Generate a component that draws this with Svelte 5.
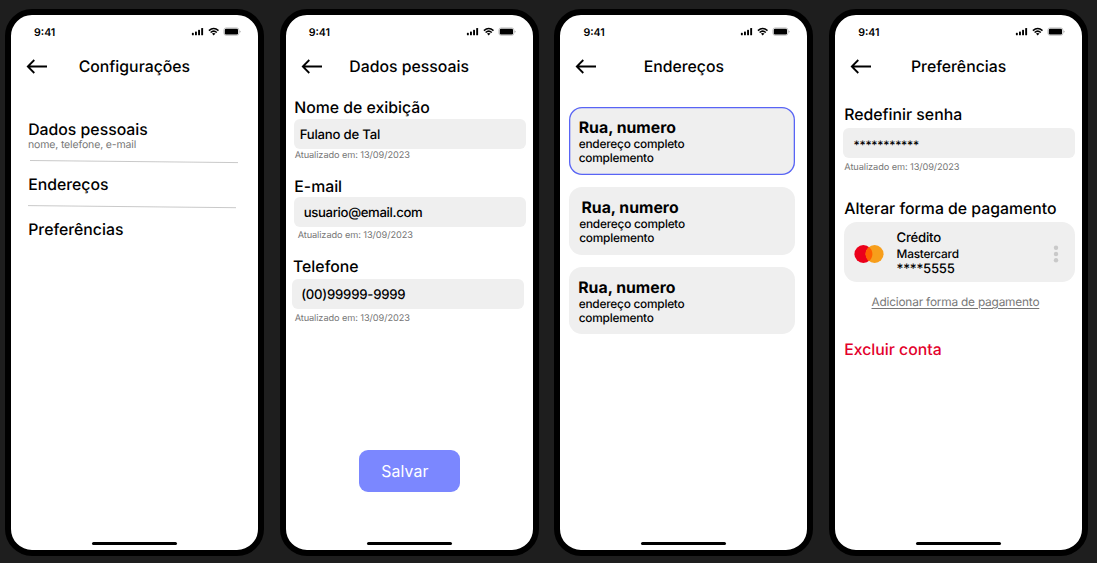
<script>
  const fields = [
    { key: 'name', label: 'Nome de exibição', value: 'Fulano de Tal' },
    { key: 'email', label: 'E-mail', value: 'usuario@email.com' },
    { key: 'tel', label: 'Telefone', value: '(00)99999-9999' }
  ];
  const addresses = [{ key: 'first' }, { key: 'second' }, { key: 'third' }];
  const updated = 'Atualizado em: 13/09/2023';
</script>

{#snippet top(title)}
  <div class="status">
    <span class="time">9:41</span>
    <svg width="50" height="10" viewBox="0 0 50 10">
      <rect x="0.9" y="5.8" width="1.9" height="2.5" rx=".6" />
      <rect x="4" y="4.5" width="1.9" height="3.8" rx=".6" />
      <rect x="7.1" y="2.8" width="1.9" height="5.5" rx=".6" />
      <rect x="10.2" y="1" width="1.9" height="7.3" rx=".6" />
      <g fill="none" stroke="#000" stroke-width="1.5">
        <path d="M17.9 3.6Q22.7-.6 27.5 3.6" />
        <path d="M19.6 5.5Q22.7 2.8 25.8 5.5" />
      </g>
      <path d="M20.9 6.6Q22.7 5.3 24.5 6.6L22.7 8.5Z" />
      <rect x="32.9" y=".9" width="15" height="7.4" rx="2.2" fill="#fff" stroke="#aaa" stroke-width=".7" />
      <rect x="33.8" y="1.7" width="13.2" height="5.8" rx="1.3" />
      <path d="M48.6 3.4q1 .5 1 1.2t-1 1.2z" fill="#999" />
    </svg>
  </div>
  <header>
    <svg width="22" height="16" viewBox="0 0 22 16">
      <path d="M21 7.5H2M8.3 1L1.8 7.5L8.3 14" fill="none" stroke="#000" stroke-width="1.8" />
    </svg>
    <h1>{title}</h1>
    <span></span>
  </header>
{/snippet}

<main>
  <section class="phone settings">
    {@render top('Configurações')}
    <div class="body">
      <h2>Dados pessoais</h2>
      <p class="hint">nome, telefone, e-mail</p>
      <svg class="rule one" width="208" height="4" viewBox="0 0 208 4"><path d="M0 .5L208 2.6" stroke="#bbb" stroke-width=".8" /></svg>
      <h2 class="addresses">Endereços</h2>
      <svg class="rule two" width="208" height="4" viewBox="0 0 208 4"><path d="M0 .6L208 2.7" stroke="#bbb" stroke-width=".8" /></svg>
      <h2 class="prefs">Preferências</h2>
    </div>
    <div class="home"></div>
  </section>

  <section class="phone personal">
    {@render top('Dados pessoais')}
    <div class="body">
      {#each fields as f}
        <div class="field {f.key}">
          <h2>{f.label}</h2>
          <div class="input">{f.value}</div>
          <p class="note">{updated}</p>
        </div>
      {/each}
      <button>Salvar</button>
    </div>
    <div class="home"></div>
  </section>

  <section class="phone places">
    {@render top('Endereços')}
    <div class="body">
      {#each addresses as a}
        <article class={a.key}>
          <h3>Rua, numero</h3>
          <p>endereço completo<br />complemento</p>
        </article>
      {/each}
    </div>
    <div class="home"></div>
  </section>

  <section class="phone preferences">
    {@render top('Preferências')}
    <div class="body">
      <h2>Redefinir senha</h2>
      <div class="input password">***********</div>
      <p class="note">{updated}</p>
      <h2 class="change">Alterar forma de pagamento</h2>
      <div class="card">
        <svg class="brand" width="30" height="20" viewBox="0 0 30 20">
          <circle cx="9.4" cy="10" r="9" fill="#eb001b" />
          <circle cx="20.6" cy="10" r="9" fill="#f79e1b" />
          <path d="M15 2.95a9 9 0 0 1 0 14.1a9 9 0 0 1 0-14.1z" fill="#ff5f00" />
        </svg>
        <div class="info">
          <span class="type">Crédito</span>
          <span class="issuer">Mastercard</span>
          <span class="digits">****5555</span>
        </div>
        <svg class="dots" width="6" height="18" viewBox="0 0 6 18" fill="#c9c9c9">
          <circle cx="3" cy="2.7" r="2.2" /><circle cx="3" cy="9" r="2.2" /><circle cx="3" cy="15.2" r="2.2" />
        </svg>
      </div>
      <a href="#add">Adicionar forma de pagamento</a>
      <h2 class="delete">Excluir conta</h2>
    </div>
    <div class="home"></div>
  </section>
</main>

<style>
  :global(body) { margin: 0; background: #1e1e1e; }
  main {
    display: flex; gap: 15.55px; box-sizing: border-box;
    width: 1097px; height: 563px; padding: 9px 0 0 4.8px; overflow: hidden;
    background: #1e1e1e; color: #000; font-family: Inter, sans-serif;
    text-rendering: geometricPrecision;
  }
  h1, h2, h3, p { margin: 0; font-weight: 400; white-space: nowrap; }
  svg { display: block; flex: none; }
  .phone {
    flex: none; display: flex; flex-direction: column; box-sizing: border-box;
    width: 259.2px; height: 547px; border: 6px solid #000; border-radius: 27px; background: #fff;
  }
  .status { display: flex; justify-content: space-between; height: 14px; padding: 10px 17px 0 23.2px; }
  .status svg { margin-top: 2px; }
  .time { font-size: 10.6px; line-height: 15.2px; font-weight: 600; }
  header { display: grid; grid-template-columns: 22px 1fr 22px; align-items: center; height: 20px; margin-top: 17.6px; padding: 0 15.2px; }
  h1, h2 { font-size: 15.8px; line-height: 21.4px; font-weight: 500; }
  h1 { line-height: 20px; text-align: center; }
  h2 { margin-bottom: -1.4px; padding-left: .6px; }
  .body { flex: 1; display: flex; flex-direction: column; align-items: flex-start; }
  .home { align-self: center; width: 85px; height: 3.5px; margin-bottom: 5px; border-radius: 2px; background: #000; }

  .settings .body { padding: 42.4px 0 0 16.8px; }
  .hint { margin: -1px 0 -1.4px .3px; color: #777; font-size: 10.54px; line-height: 13.4px; letter-spacing: -.15px; }
  .rule.one { margin: 9.8px 0 0 2.6px; }
  .addresses { margin-top: 10.4px; }
  .rule.two { margin: 10.4px 0 0 .5px; }
  .prefs { margin-top: 10.4px; }

  .input {
    box-sizing: border-box; width: 232px; height: 30px; border-radius: 6px;
    background: #efefef; font-size: 13.17px; line-height: 32px; font-weight: 500; letter-spacing: -.22px;
  }
  .note { color: #777; font-size: 9.22px; line-height: 15.6px; letter-spacing: -.09px; }
  .personal .body { padding: 20.6px 0 0 6.6px; }
  .field h2 { padding-left: 2.2px; }
  .name .input { margin: 1.8px 0 0 1.6px; padding-left: 6px; }
  .name .note { margin: -.7px 0 -3.6px 2.5px; }
  .email { margin-top: 16px; }
  .email .input { margin: .8px 0 0 1.6px; padding-left: 10px; letter-spacing: -.35px; }
  .email .note { margin: 1.2px 0 -3.1px 5.5px; }
  .tel { margin-top: 15.3px; }
  .tel h2 { padding-left: .9px; }
  .tel .input { margin: 2.4px 0 0; padding-left: 9px; }
  .tel .note { margin: 2.3px 0 -3.1px 2.5px; }
  button {
    width: 101px; height: 41.5px; margin: 127px 0 0 66.8px; padding: 0 0 0 22.3px; border: 0; border-radius: 9px;
    background: #7b87ff; color: #fff; font: 400 15.8px/41px Inter, sans-serif; text-align: left;
    letter-spacing: .12px;
  }

  .places .body { gap: 12.2px; padding: 30.6px 0 0 8.6px; }
  article {
    box-sizing: border-box; width: 226px; height: 67.6px; padding: 10px 0 0 9.9px;
    border-radius: 13px; background: #efefef;
  }
  article.first { box-shadow: inset 0 0 0 1.3px #5864f5; }
  article.second { padding-left: 10.4px; }
  article.second h3 { padding-left: 2.2px; }
  article.third h3 { margin-left: -.5px; }
  h3 { margin-bottom: -.4px; font-size: 15.8px; line-height: 21.4px; font-weight: 700; }
  article p { font-size: 11.86px; line-height: 13.9px; font-weight: 500; letter-spacing: -.24px; }

  .preferences .body { padding: 27.6px 0 0 8px; }
  .preferences h2 { padding-left: 1.2px; }
  .password { margin: 3.8px 0 0 0; padding-left: 10.5px; font-size: 11.86px; line-height: 35px; }
  .preferences .note { margin: 2.4px 0 -3.1px 1.3px; }
  .preferences .change { margin-top: 25.4px; }
  .card {
    display: flex; align-items: center; box-sizing: border-box; width: 231px; height: 60px;
    margin: 3.7px 0 0 1px; padding: 0 15.6px 0 9.6px; border-radius: 13px; background: #efefef;
  }
  .brand { margin-top: 4px; }
  .info { flex: 1; display: flex; flex-direction: column; padding: 3px 0 0 13px; font-weight: 500; letter-spacing: -.24px; }
  .type { font-size: 13.17px; line-height: 18px; }
  .issuer { font-size: 11.86px; line-height: 15.2px; }
  .digits { font-size: 13.17px; line-height: 15.6px; }
  .dots { margin-top: 4px; }
  a {
    margin: 12.8px 0 0 28.5px; color: #777; font-size: 11.86px; line-height: 14px; white-space: nowrap;
    letter-spacing: -.2px; text-underline-offset: 2px; text-decoration-thickness: 1px;
  }
  .preferences .delete { margin-top: 30.4px; color: #e3002b; }
</style>
